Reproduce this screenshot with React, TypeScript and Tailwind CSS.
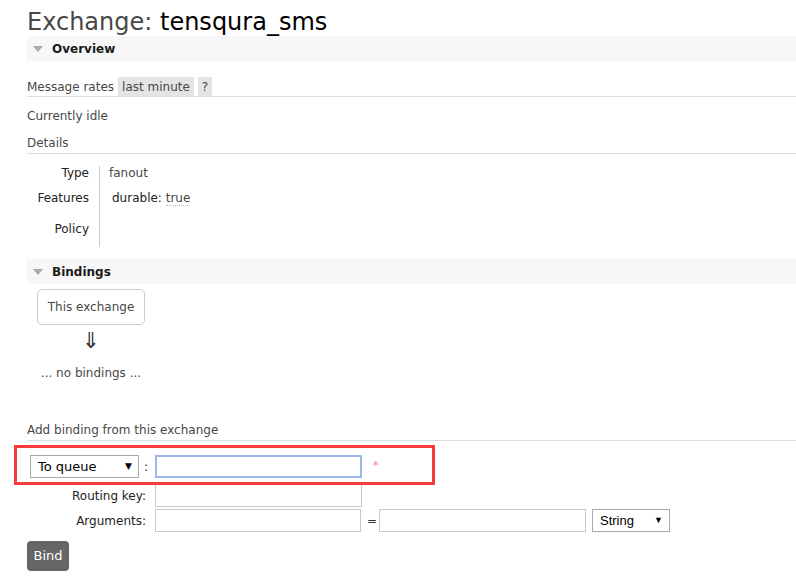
const font = "font-['DejaVu_Sans',Verdana,sans-serif]";

const SectionBar = ({ title }: { title: string }) => (
  <div className="h-[25px] bg-[#f7f7f7] flex items-center pl-[6px]">
    <span className="w-0 h-0 border-l-[5px] border-r-[5px] border-t-[6px] border-l-transparent border-r-transparent border-t-[#aaa]" />
    <span className="ml-[9px] font-bold text-[#1a1a1a]">{title}</span>
  </div>
);

const TextInput = ({ focused, w = "w-[207px]" }: { focused?: boolean; w?: string }) => (
  <div
    className={
      focused
        ? `${w} h-[23px] border-2 border-[#9ab8ee] bg-white`
        : `${w} h-[23px] border border-[#c8c8c8] bg-white`
    }
  />
);

const App = () => {
  return (
    <div className={`relative w-[796px] h-[584px] bg-white text-[12px] text-[#484848] ${font}`}>
      <div className="pl-[27px]">
        {/* Title */}
        <h1 className="pt-[9px] h-[36px] text-[24px] leading-[27px] whitespace-nowrap">
          <span className="text-[#484848]">Exchange: </span>
          <span className="text-black">tensqura_sms</span>
        </h1>

        {/* Overview */}
        <SectionBar title="Overview" />

        <div className="mt-[16px] h-[20px] flex items-start border-b border-[#ddd]">
          <span className="leading-[20px]">Message rates</span>
          <span className="ml-[4px] h-[19px] px-[4px] bg-[#e4e4e4] leading-[20px]">last minute</span>
          <span className="ml-[4px] h-[19px] w-[14px] bg-[#e4e4e4] leading-[20px] text-center">?</span>
        </div>

        <div className="mt-[9px] h-[20px] leading-[20px]">Currently idle</div>
        <div className="mt-[7px] h-[21px] leading-[20px] border-b border-[#ddd]">Details</div>

        <div className="mt-[7px] flex">
          <div className="w-[72px] pr-[10px] text-right text-[#222]">
            <div className="h-[25px] leading-[25px]">Type</div>
            <div className="h-[25px] leading-[25px]">Features</div>
            <div className="h-[36px] leading-[36px]">Policy</div>
          </div>
          <div className="mt-[5px] h-[81px] border-l border-[#ccc] pl-[9px]">
            <div className="h-[15px] leading-[15px]">fanout</div>
            <div className="mt-[10px] ml-[3px] h-[15px] leading-[15px] whitespace-nowrap">
              <span className="text-[#222]">durable: </span>
              <span className="border-b border-dotted border-[#bbb]">true</span>
            </div>
          </div>
        </div>

        {/* Bindings */}
        <div className="mt-[12px]">
          <SectionBar title="Bindings" />
        </div>

        <div className="ml-[10px] mt-[5px] w-[108px] flex flex-col items-center">
          <div className="w-[108px] h-[36px] border border-[#ccc] rounded-[5px] flex items-center justify-center">
            This exchange
          </div>
          <div className="mt-[4px] h-[24px] leading-[24px] text-[22px] text-[#333]">⇓</div>
          <div className="mt-[10px] h-[20px] leading-[20px] whitespace-nowrap">... no bindings ...</div>
        </div>

        <div className="mt-[37px] h-[21px] leading-[20px] border-b border-[#ddd]">
          Add binding from this exchange
        </div>

        {/* Form */}
        <div className="mt-[14px] flex items-center h-[23px]">
          <div className="w-[123px] flex items-center justify-end pr-[2px]">
            <div className="w-[109px] h-[23px] border border-[#a9a9a9] flex items-center justify-between pl-[7px] pr-[6px] text-[13px] text-black">
              <span>To queue</span>
              <span className="text-[9px]">▼</span>
            </div>
            <span className="ml-[5px] text-[#222]">:</span>
          </div>
          <div className="ml-[5px]">
            <TextInput focused />
          </div>
          <span className="ml-[11px] text-[#f77] text-[11px]">*</span>
        </div>

        <div className="mt-[6px] flex items-center h-[23px]">
          <div className="w-[123px] pr-[4px] text-right text-[#222]">Routing key:</div>
          <div className="ml-[5px]">
            <TextInput />
          </div>
        </div>

        <div className="mt-[2px] flex items-center h-[23px]">
          <div className="w-[123px] pr-[4px] text-right text-[#222]">Arguments:</div>
          <div className="ml-[5px]">
            <TextInput w="w-[206px]" />
          </div>
          <span className="ml-[6px] w-[12px] text-[#333]">=</span>
          <TextInput w="w-[207px]" />
          <div className="ml-[6px] w-[78px] h-[23px] border border-[#a9a9a9] flex items-center justify-between pl-[7px] pr-[6px] text-[13px] text-black font-['Liberation_Sans',Arial,sans-serif]">
            <span>String</span>
            <span className="text-[9px]">▼</span>
          </div>
        </div>

        <button className="mt-[9px] w-[42px] h-[30px] bg-[#666] rounded-[4px] text-white text-[13px]">
          Bind
        </button>
      </div>

      {/* annotation highlight */}
      <div className="absolute left-[14px] top-[445px] w-[421px] h-[40px] border-[3px] border-[#f43c3c]" />
    </div>
  );
};

export default App;
